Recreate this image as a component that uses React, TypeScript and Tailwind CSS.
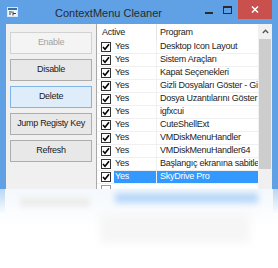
const rows = [
  "Desktop Icon Layout",
  "Sistem Araçları",
  "Kapat Seçenekleri",
  "Gizli Dosyaları Göster - Gizle",
  "Dosya Uzantılarını Göster - Gizle",
  "igfxcui",
  "CuteShellExt",
  "VMDiskMenuHandler",
  "VMDiskMenuHandler64",
  "Başlangıç ekranına sabitle",
  "SkyDrive Pro",
];

function CheckBox() {
  return (
    <div className="w-[10px] h-[10px] shrink-0 border border-[#333] bg-white flex items-center justify-center">
      <svg width="8" height="8" viewBox="0 0 8 8">
        <path d="M1 4 L3 6.2 L7 1.2" fill="none" stroke="#000" strokeWidth="1.6" />
      </svg>
    </div>
  );
}

function SideButton({ label, variant }: { label: string; variant?: "disabled" | "hover" }) {
  const look =
    variant === "disabled"
      ? "border-[#d2d2d2] bg-[#f4f4f4] text-[#a3a3a3]"
      : variant === "hover"
      ? "border-[#7eb4ea] bg-[#dfedfb] text-[#1b1b1b]"
      : "border-[#adadad] bg-[#e8e8e8] text-[#1b1b1b]";
  return (
    <div
      className={`w-[82px] h-[22px] shrink-0 border flex items-center justify-center text-[9px] tracking-[-0.3px] ${look}`}
    >
      {label}
    </div>
  );
}

export default function App() {
  return (
    <div className="w-[278px] h-[268px] bg-white overflow-hidden font-['Liberation_Sans',Arial,sans-serif] relative">
      {/* Window */}
      <div className="h-[189px] bg-[#60a0e4] flex flex-col">
        {/* Title bar */}
        <div className="h-[24px] shrink-0 flex items-start relative">
          <div className="pl-[7px] pt-[7px]">
            <svg width="11" height="10" viewBox="0 0 11 10">
              <rect x="0.5" y="0.5" width="10" height="9" fill="#eef5fc" stroke="#d8e6f4" />
              <rect x="1" y="1" width="9" height="2" fill="#3a6ea5" />
              <path d="M2 5h3M2 7h2M6 4.5v4M6 6.5h3" stroke="#3b3b3b" strokeWidth="1" />
            </svg>
          </div>
          <div className="ml-[37px] pt-[6px] text-[11px] text-[#2a2a2a] leading-[14px]">ContextMenu Cleaner</div>
          <div className="ml-auto flex items-start">
            <div className="w-[8px] h-[2px] bg-[#2b2b2b] mt-[12px]" />
            <div className="w-[9px] h-[8px] border border-t-2 border-[#2b2b2b] ml-[10px] mt-[6px]" />
            <div className="w-[34px] h-[19px] bg-[#c9504c] ml-[6px] flex items-center justify-center">
              <svg width="8" height="7" viewBox="0 0 8 7">
                <path d="M1 0.5 L7 6.5 M7 0.5 L1 6.5" stroke="#fff" strokeWidth="1.5" />
              </svg>
            </div>
          </div>
          <div className="w-[6px]" />
        </div>

        {/* Client area */}
        <div className="flex-1 flex ml-[6px] mr-[6px] overflow-hidden">
          {/* Buttons */}
          <div className="w-[91px] shrink-0 bg-[#f0f0f0] border-r border-[#a9a9a9] flex flex-col items-center pt-[8px] gap-[5px]">
            <SideButton label="Enable" variant="disabled" />
            <SideButton label="Disable" />
            <SideButton label="Delete" variant="hover" />
            <SideButton label="Jump Registy Key" />
            <SideButton label="Refresh" />
          </div>

          {/* List view */}
          <div className="w-[161px] shrink-0 bg-white flex flex-col overflow-hidden text-[9px] tracking-[-0.25px] text-[#1c1c1c]">
            <div className="h-[17px] shrink-0 flex items-center">
              <div className="w-[60px] h-full shrink-0 border-r border-[#e5e5e5] pl-[5px] flex items-center">Active</div>
              <div className="pl-[3px] whitespace-nowrap">Program</div>
            </div>
            {rows.map((name) => {
              const sel = name === "SkyDrive Pro";
              return (
                <div key={name} className="h-[13px] shrink-0 flex border-b border-[#f0f0f0]">
                  <div className="w-[60px] shrink-0 flex items-center pl-[4px] border-r border-[#f0f0f0]">
                    <CheckBox />
                    <div className={`flex-1 h-full flex items-center ml-[3px] pl-[1px] ${sel ? "bg-[#3399ff] text-white" : ""}`}>
                      Yes
                    </div>
                  </div>
                  <div className={`flex-1 pl-[3px] flex items-center whitespace-nowrap overflow-hidden ${sel ? "bg-[#3399ff] text-white" : ""}`}>
                    {name}
                  </div>
                </div>
              );
            })}
            <div className="h-[13px] shrink-0 flex pl-[4px] pt-[1px]">
              <div className="w-[10px] h-[10px] border border-[#9a9a9a] bg-white" />
            </div>
          </div>

          {/* Scrollbar */}
          <div className="flex-1 bg-[#f0f0f0] flex flex-col items-center">
            <div className="h-[15px] shrink-0 flex items-center justify-center">
              <svg width="7" height="5" viewBox="0 0 7 5">
                <path d="M0.8 4 L3.5 1.2 L6.2 4" fill="none" stroke="#555" strokeWidth="1.3" />
              </svg>
            </div>
            <div className="w-[12px] h-[130px] bg-[#cdcdcd]" />
          </div>
        </div>
      </div>

      {/* Reflection */}
      <div className="h-[79px] relative bg-gradient-to-b from-[#f4f8fc] via-white to-white">
        <div className="absolute left-0 top-0 w-[5px] h-[26px] bg-gradient-to-b from-[#b9d6f3] to-white" />
        <div className="absolute right-0 top-0 w-[5px] h-[26px] bg-gradient-to-b from-[#b9d6f3] to-white" />
        <div className="absolute left-[20px] top-[8px] w-[70px] h-[10px] bg-[#eeeeee] blur-[2px]" />
        <div className="absolute left-[115px] top-[4px] w-[143px] h-[10px] bg-[#b6d7f8] blur-[3px]" />
        <div className="absolute left-[100px] top-[24px] w-[150px] h-[30px] bg-[#f6f6f6] blur-[4px]" />
      </div>
    </div>
  );
}
